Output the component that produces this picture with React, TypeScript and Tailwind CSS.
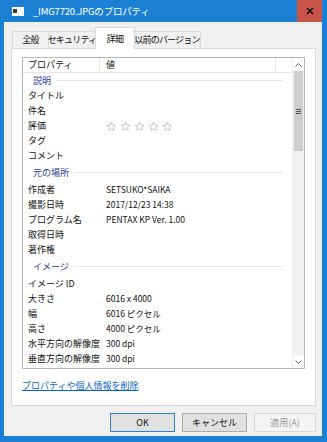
import React from "react";

type Row =
  | { group: string; first?: boolean }
  | { name: string; value?: string; stars?: boolean };

const rows: Row[] = [
  { group: "説明", first: true },
  { name: "タイトル" },
  { name: "件名" },
  { name: "評価", stars: true },
  { name: "タグ" },
  { name: "コメント" },
  { group: "元の場所" },
  { name: "作成者", value: "SETSUKO*SAIKA" },
  { name: "撮影日時", value: "2017/12/23 14:38" },
  { name: "プログラム名", value: "PENTAX KP Ver. 1.00" },
  { name: "取得日時" },
  { name: "著作権" },
  { group: "イメージ" },
  { name: "イメージ ID" },
  { name: "大きさ", value: "6016 x 4000" },
  { name: "幅", value: "6016 ピクセル" },
  { name: "高さ", value: "4000 ピクセル" },
  { name: "水平方向の解像度", value: "300 dpi" },
  { name: "垂直方向の解像度", value: "300 dpi" },
];

function Star() {
  return (
    <svg width="11" height="11" viewBox="0 0 24 24" fill="none" stroke="#b4b4b4" strokeWidth="1.6" strokeLinejoin="round">
      <path d="M12 2.5l2.9 6.2 6.6.7-5 4.5 1.4 6.6L12 17.2l-5.9 3.3 1.4-6.6-5-4.5 6.6-.7z" />
    </svg>
  );
}

function Tab({ label, width, active }: { label: string; width: string; active?: boolean }) {
  if (active) {
    return (
      <div
        className={`${width} h-[22px] -mb-px -mx-px relative z-10 bg-white border border-b-0 border-[#d9d9d9] flex items-start pt-[4px] justify-center whitespace-nowrap text-[9px] tracking-[-0.4px] text-[#111]`}
      >
        {label}
      </div>
    );
  }
  return (
    <div
      className={`${width} h-[17px] bg-[#f0f0f0] border border-b-0 border-[#d9d9d9] -ml-px first:ml-0 flex items-center justify-center whitespace-nowrap text-[9px] tracking-[-0.8px] text-[#111]`}
    >
      {label}
    </div>
  );
}

export default function App() {
  return (
    <div className="w-[327px] h-[442px] bg-[#1b7fd3] flex flex-col font-['Noto_Sans_CJK_JP','Noto_Sans',sans-serif] overflow-hidden">
      {/* title bar */}
      <div className="h-[22px] shrink-0 flex items-center">
        <svg width="12" height="9" viewBox="0 0 12 9" className="ml-[12px]">
          <rect x="0" y="0" width="12" height="9" fill="#ffffff" />
          <rect x="1" y="2" width="4" height="4" fill="#3c3c3c" />
        </svg>
        <span className="ml-[9px] text-[9.5px] text-white tracking-[-0.2px]">_IMG7720.JPGのプロパティ</span>
        <div className="ml-auto mr-[5px] w-[25px] h-[22px] bg-[#c9554a] flex items-center justify-center">
          <svg width="8" height="8" viewBox="0 0 8 8">
            <path d="M1 1l6 6M7 1l-6 6" stroke="#111" strokeWidth="1.6" />
          </svg>
        </div>
      </div>

      {/* dialog body */}
      <div className="flex-1 ml-[4px] mr-[5px] mb-[6px] bg-[#f0f0f0] flex flex-col">
        <div className="flex items-end pl-[8px] pt-[5px]">
          <Tab label="全般" width="w-[37px]" />
          <Tab label="セキュリティ" width="w-[48px]" />
          <Tab label="詳細" width="w-[40px]" active />
          <Tab label="以前のバージョン" width="w-[68px]" />
        </div>

        {/* tab panel */}
        <div className="ml-[7px] mr-[6px] h-[358px] bg-white border border-[#d9d9d9] flex flex-col px-[10px] pt-[8px]">
          <div className="h-[312px] border border-[#b9b9b9] flex">
            <div className="flex-1 flex flex-col overflow-hidden">
              <div className="h-[15px] shrink-0 flex border-b border-[#e5e5e5] text-[9px] text-[#111]">
                <div className="w-[77px] border-r border-[#e5e5e5] pl-[5px] flex items-center">プロパティ</div>
                <div className="w-[176px] border-r border-[#e5e5e5] pl-[6px] flex items-center">値</div>
              </div>
              {rows.map((r, i) =>
                "group" in r ? (
                  <div key={i} className={`${r.first ? "h-[15px]" : "h-[19px]"} shrink-0 flex items-center pl-[10px] pr-[9px]`}>
                    <span className="text-[9px] text-[#1e3a96]">{r.group}</span>
                    <div className="flex-1 h-px bg-[#e4e7ef] ml-[5px]" />
                  </div>
                ) : (
                  <div key={i} className="h-[15px] shrink-0 flex items-center text-[9px] text-[#111]">
                    <div className="w-[77px] pl-[5px] whitespace-nowrap">{r.name}</div>
                    <div className="pl-[6px] whitespace-nowrap text-[8.5px]">
                      {r.stars ? (
                        <div className="flex gap-[3px] pt-[1px]">
                          <Star />
                          <Star />
                          <Star />
                          <Star />
                          <Star />
                        </div>
                      ) : (
                        r.value
                      )}
                    </div>
                  </div>
                )
              )}
            </div>
            {/* scrollbar */}
            <div className="w-[12px] shrink-0 bg-[#f0f0f0] flex flex-col border-l border-[#f0f0f0]">
              <div className="h-[13px] bg-white flex items-center justify-center">
                <svg width="7" height="4" viewBox="0 0 7 4">
                  <path d="M0.5 3.5l3-3 3 3" stroke="#606060" fill="none" />
                </svg>
              </div>
              <div className="h-[80px] mx-[1px] bg-[#cdcdcd] flex flex-col items-center justify-center gap-[1px]">
                <div className="w-[5px] h-px bg-[#555]" />
                <div className="w-[5px] h-px bg-[#555]" />
                <div className="w-[5px] h-px bg-[#555]" />
              </div>
              <div className="flex-1" />
              <div className="h-[13px] bg-white flex items-center justify-center">
                <svg width="7" height="4" viewBox="0 0 7 4">
                  <path d="M0.5 0.5l3 3 3-3" stroke="#606060" fill="none" />
                </svg>
              </div>
            </div>
          </div>
          <div className="mt-[12px] text-[9px] text-[#0a64c8] underline underline-offset-1 leading-none">
            プロパティや個人情報を削除
          </div>
        </div>

        {/* buttons */}
        <div className="flex justify-end gap-[7px] mt-[7px] mr-[6px] text-[9px]">
          <button className="w-[65px] h-[19px] bg-[#e1e1e1] border border-[#2e7fd0] text-[#111]">OK</button>
          <button className="w-[65px] h-[19px] bg-[#e1e1e1] border border-[#adadad] text-[#111]">キャンセル</button>
          <button className="w-[62px] h-[19px] bg-[#f4f4f4] border border-[#d8d8d8] text-[#9a9a9a]">適用(A)</button>
        </div>
      </div>
    </div>
  );
}
